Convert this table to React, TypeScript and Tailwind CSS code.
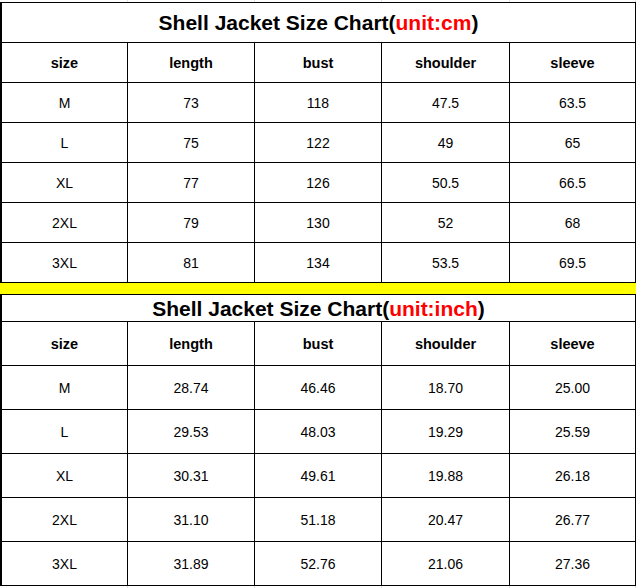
import React from 'react';

type Row = [string, string, string, string, string];

const HEAD: Row = ['size', 'length', 'bust', 'shoulder', 'sleeve'];

const CM_ROWS: Row[] = [
  ['M', '73', '118', '47.5', '63.5'],
  ['L', '75', '122', '49', '65'],
  ['XL', '77', '126', '50.5', '66.5'],
  ['2XL', '79', '130', '52', '68'],
  ['3XL', '81', '134', '53.5', '69.5'],
];

const INCH_ROWS: Row[] = [
  ['M', '28.74', '46.46', '18.70', '25.00'],
  ['L', '29.53', '48.03', '19.29', '25.59'],
  ['XL', '30.31', '49.61', '19.88', '26.18'],
  ['2XL', '31.10', '51.18', '20.47', '26.77'],
  ['3XL', '31.89', '52.76', '21.06', '27.36'],
];

// column widths incl. right border line
const COLS = ['w-[126px]', 'w-[127px]', 'w-[127px]', 'w-[128px]', 'w-[126px]'];

const GridRow: React.FC<{ cells: Row; h: string; bold?: boolean }> = ({ cells, h, bold }) => (
  <div className={`flex border-b border-black ${h}`}>
    {cells.map((c, i) => (
      <div
        key={i}
        className={`${COLS[i]} border-r border-black flex items-center justify-center pt-[2px] text-black ${
          bold ? 'font-bold text-[14.5px]' : 'text-[14px]'
        }`}
      >
        {c}
      </div>
    ))}
  </div>
);

const Title: React.FC<{ unit: string; h: string }> = ({ unit, h }) => (
  <div className={`flex items-center justify-center border-b border-r border-black ${h}`}>
    <span className="text-[21px] font-bold text-black leading-none">
      Shell Jacket Size Chart(<span className="text-[#ff0000]">{unit}</span>)
    </span>
  </div>
);

// faint spreadsheet gridlines peeking out above / below the chart
const Ghost: React.FC<{ h: string }> = ({ h }) => (
  <div className={`flex ${h} pl-[2px]`}>
    {COLS.map((w, i) => (
      <div key={i} className={`${w} border-r border-[#e3e3e3]`} />
    ))}
  </div>
);

export default function App() {
  return (
    <div
      className="w-[639px] h-[588px] bg-white overflow-hidden"
      style={{ fontFamily: '"Liberation Sans", Arial, sans-serif' }}
    >
      <Ghost h="h-[2px]" />
      <div className="w-[636px] border-l-2 border-t border-black">
        <Title unit="unit:cm" h="h-[40px]" />
        <GridRow cells={HEAD} h="h-[40px]" bold />
        {CM_ROWS.map((r) => (
          <GridRow key={r[0]} cells={r} h="h-[40px]" />
        ))}

        <div className="h-[12px] bg-[#ffff00] border-b border-black -ml-[2px]" />

        <Title unit="unit:inch" h="h-[27px]" />
        <GridRow cells={HEAD} h="h-[44px]" bold />
        {INCH_ROWS.map((r) => (
          <GridRow key={r[0]} cells={r} h="h-[44px]" />
        ))}
      </div>
      <Ghost h="h-[2px]" />
    </div>
  );
}
